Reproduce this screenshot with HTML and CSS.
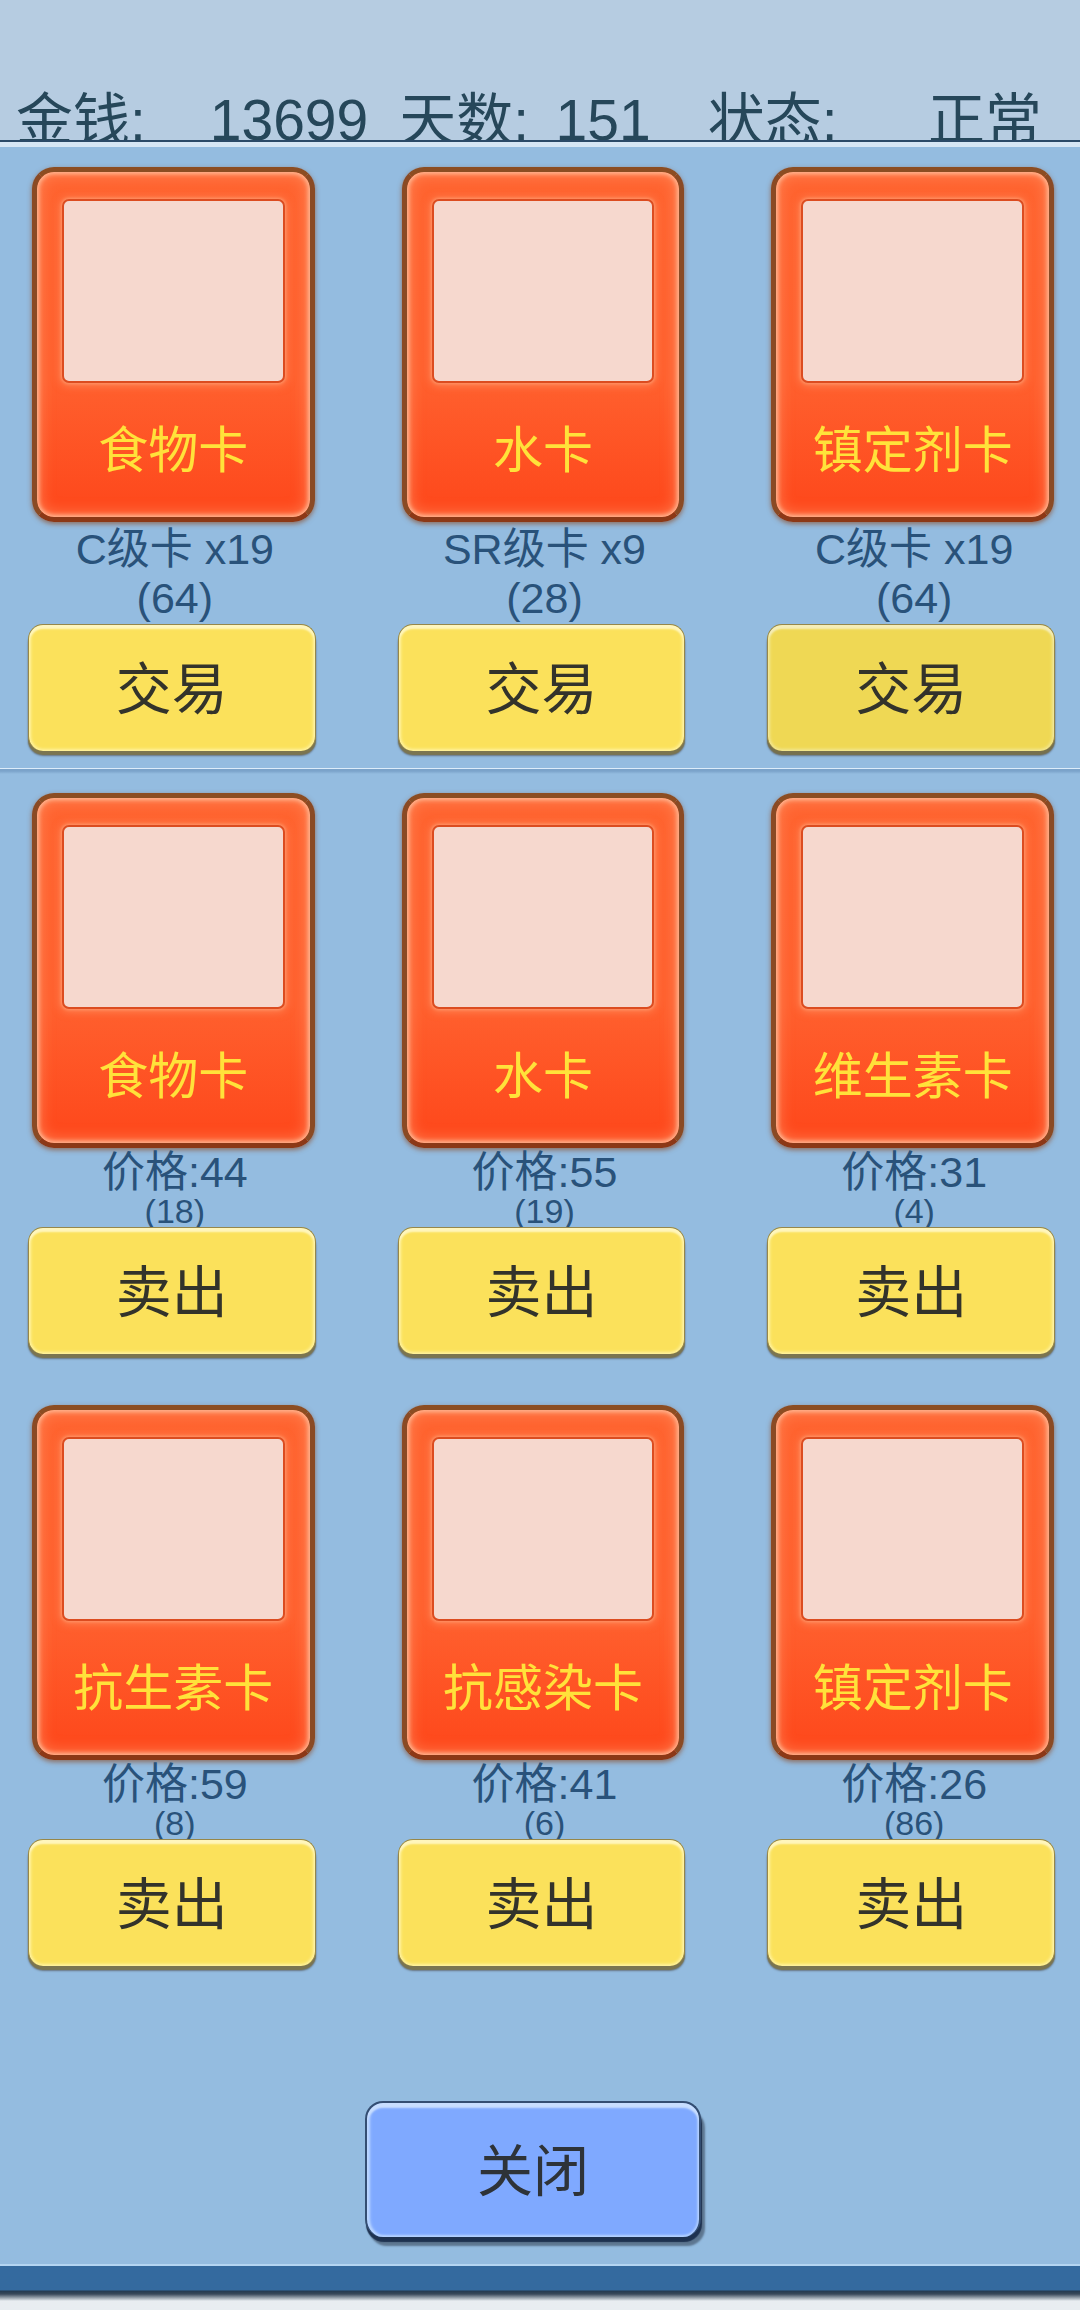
FILE: index.html
```html
<!DOCTYPE html>
<html lang="zh-CN">
<head>
  <meta charset="UTF-8">
  <meta name="viewport" content="width=device-width, initial-scale=1.0">
  <title>交易</title>
  <link rel="stylesheet" href="styles.css">
</head>
<body>

<header class="status">
  <div class="stat money"><span>金钱:</span><span>13699</span></div>
  <div class="stat days"><span>天数:</span><span>151</span></div>
  <div class="stat state"><span>状态:</span><span>正常</span></div>
</header>

<main class="shop">
  <section class="row trade">
    <article class="item">
      <div class="card"><div class="picture"></div><h2>食物卡</h2></div>
      <div class="info"><p>C级卡 x19</p><p>(64)</p></div>
      <button type="button" class="btn">交易</button>
    </article>
    <article class="item">
      <div class="card"><div class="picture"></div><h2>水卡</h2></div>
      <div class="info"><p>SR级卡 x9</p><p>(28)</p></div>
      <button type="button" class="btn">交易</button>
    </article>
    <article class="item">
      <div class="card"><div class="picture"></div><h2>镇定剂卡</h2></div>
      <div class="info"><p>C级卡 x19</p><p>(64)</p></div>
      <button type="button" class="btn active">交易</button>
    </article>
  </section>

  <section class="row sell">
    <article class="item">
      <div class="card"><div class="picture"></div><h2>食物卡</h2></div>
      <div class="info"><p>价格:44</p><p class="count">(18)</p></div>
      <button type="button" class="btn">卖出</button>
    </article>
    <article class="item">
      <div class="card"><div class="picture"></div><h2>水卡</h2></div>
      <div class="info"><p>价格:55</p><p class="count">(19)</p></div>
      <button type="button" class="btn">卖出</button>
    </article>
    <article class="item">
      <div class="card"><div class="picture"></div><h2>维生素卡</h2></div>
      <div class="info"><p>价格:31</p><p class="count">(4)</p></div>
      <button type="button" class="btn">卖出</button>
    </article>
    <article class="item">
      <div class="card"><div class="picture"></div><h2>抗生素卡</h2></div>
      <div class="info"><p>价格:59</p><p class="count">(8)</p></div>
      <button type="button" class="btn">卖出</button>
    </article>
    <article class="item">
      <div class="card"><div class="picture"></div><h2>抗感染卡</h2></div>
      <div class="info"><p>价格:41</p><p class="count">(6)</p></div>
      <button type="button" class="btn">卖出</button>
    </article>
    <article class="item">
      <div class="card"><div class="picture"></div><h2>镇定剂卡</h2></div>
      <div class="info"><p>价格:26</p><p class="count">(86)</p></div>
      <button type="button" class="btn">卖出</button>
    </article>
  </section>

  <div class="actions">
    <button type="button" class="btn-close">关闭</button>
  </div>
</main>

<footer class="edge"></footer>

</body>
</html>
```
FILE: styles.css
```css
:root {
  --panel-bg: #94bce0;
  --header-bg: #b6cce1;
  --header-text: #26475a;
  --info-text: #29527a;
  --button-bg: #fbe15b;
  --button-active: #efd854;
  --close-bg: #7fa9ff;
  --card-text: #ffe23a;
}
* {
  box-sizing: border-box;
}
body {
  margin: 0;
  min-height: 100vh;
  display: flex;
  flex-direction: column;
  background: #e8edf1;
  font-family: "Liberation Sans", "Noto Sans CJK SC", sans-serif;
}
h2, p {
  margin: 0;
  font-weight: normal;
}

/* status bar */
.status {
  display: flex;
  height: 142px;
  padding: 88px 38px 0 16px;
  overflow: hidden;
  background: var(--header-bg);
  border-bottom: 2px solid #2b4a68;
  color: var(--header-text);
  font-size: 57px;
  line-height: 65px;
}
.stat {
  display: flex;
  justify-content: space-between;
  white-space: nowrap;
}
.money {
  flex: 353;
  margin-right: 31px;
}
.days {
  flex: 252;
  margin-right: 57px;
}
.state {
  flex: 335;
}

/* main panel */
.shop {
  flex: 1;
  display: flex;
  flex-direction: column;
  background: var(--panel-bg);
  border-top: 5px solid #d6e6f5;
  border-bottom: 2px solid #b4d5f2;
}
.row {
  display: grid;
  grid-template-columns: repeat(3, 1fr);
  gap: 51px 82px;
  padding: 20px 25px 0 28px;
}
.trade {
  padding-bottom: 17px;
  border-bottom: 1px solid #dcecfa;
}
.sell {
  padding-top: 24px;
  background: linear-gradient(#7ba3ca, #7ba3ca 2px, var(--panel-bg) 5px);
}
.item {
  display: flex;
  flex-direction: column;
}

/* card */
.card {
  height: 355px;
  margin: 0 1px 0 4px;
  padding: 27px 25px 0;
  border: 5px solid;
  border-color: #8c4d22 #8a4a24 #8c3816;
  border-radius: 22px;
  background: linear-gradient(#ff6430, #ff602e 60%, #fe4a1d 95%);
  box-shadow: inset 0 0 4px 2px #ffb894, inset 0 0 14px 4px rgba(255, 150, 105, 0.6), 0 2px 5px rgba(140, 75, 40, 0.7);
  text-align: center;
}
.picture {
  height: 184px;
  border: 2px solid #dc4c20;
  border-radius: 7px;
  background: #f6d8ce;
  box-shadow: 0 0 3px 1px #ff9466, 0 1px 8px 2px rgba(255, 150, 105, 0.6);
}
.card h2 {
  margin-top: 38px;
  color: var(--card-text);
  font-size: 50px;
  line-height: 60px;
  white-space: nowrap;
}
.info {
  padding-top: 1px;
  margin-left: 6px;
  margin-bottom: -1px;
  color: var(--info-text);
  font-size: 43px;
  line-height: 46px;
  text-align: center;
}
.trade .info {
  padding: 3px 0 2px;
  line-height: 49px;
}
.info .count {
  font-size: 34px;
  line-height: 33px;
}

/* buttons */
button {
  border: none;
  color: #33332b;
  font-family: inherit;
  font-size: 56px;
  cursor: pointer;
}
.btn {
  height: 127px;
  padding: 0 0 7px;
  border: 1px solid #96874a;
  border-bottom: none;
  border-radius: 15px;
  background: var(--button-bg);
  box-shadow: inset 0 4px 2px #fff6bd, inset 0 0 3px 2px #fff3a0, 0 4px 1px #7b7550, 0 5px 2px #68788a;
}
.btn.active {
  background: var(--button-active);
  box-shadow: inset 0 4px 2px #f5edb7, inset 0 0 3px 2px #f2e794, 0 4px 1px #76704d, 0 5px 2px #68788a;
}
.actions {
  display: flex;
  justify-content: center;
  margin-top: auto;
  padding: 0 14px 27px 0;
}
.btn-close {
  width: 336px;
  height: 136px;
  padding: 0 0 7px;
  border: 2px solid #344e72;
  border-bottom: none;
  border-radius: 18px;
  background: var(--close-bg);
  box-shadow: inset 0 5px 2px #c8deff, inset 2px 0 3px 1px #b8d4ff, inset 0 0 2px 2px #a8c8ff, 1px 5px 1px #1e3250, 4px 9px 2px #5d7690;
  color: #2e3338;
}

/* bottom edge of the panel */
.edge {
  height: 44px;
  background: linear-gradient(#346a9f 24px, #243a50 25px, #38485a 28px, #e8edf1 35px);
}
```
